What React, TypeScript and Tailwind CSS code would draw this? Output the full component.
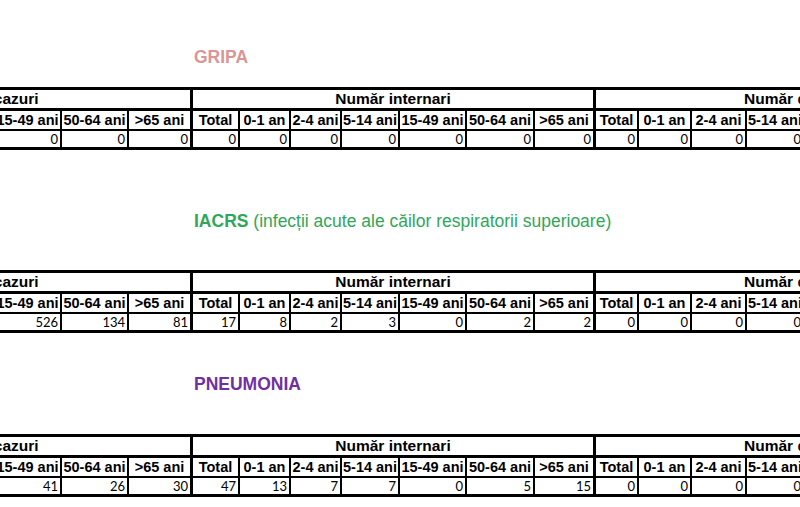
const headFont = { fontFamily: '"Liberation Sans", Arial, sans-serif' };
const numFont = { fontFamily: 'Lato, "Open Sans", sans-serif' };

const ages = ["Total", "0-1 an", "2-4 ani", "5-14 ani", "15-49 ani", "50-64 ani", ">65 ani"];
const groups = ["Număr cazuri", "Număr internari", "Număr decese"];

type Section = {
  title: string;
  note?: string;
  color: string;
  gapTop: string;
  gapTable: string;
  values: string[][];
};

const sections: Section[] = [
  {
    title: "GRIPA",
    color: "text-[#da9694]",
    gapTop: "mt-[47px]",
    gapTable: "mt-[20px]",
    values: [
      ["0", "0", "0", "0", "0", "0", "0"],
      ["0", "0", "0", "0", "0", "0", "0"],
      ["0", "0", "0", "0", "0", "0", "0"],
    ],
  },
  {
    title: "IACRS",
    note: " (infecții acute ale căilor respiratorii superioare)",
    color: "text-[#2fa75a]",
    gapTop: "mt-[61px]",
    gapTable: "mt-[39px]",
    values: [
      ["1698", "210", "345", "402", "526", "134", "81"],
      ["17", "8", "2", "3", "0", "2", "2"],
      ["0", "0", "0", "0", "0", "0", "0"],
    ],
  },
  {
    title: "PNEUMONIA",
    color: "text-[#7030a0]",
    gapTop: "mt-[41px]",
    gapTable: "mt-[40px]",
    values: [
      ["145", "18", "21", "9", "41", "26", "30"],
      ["47", "13", "7", "7", "0", "5", "15"],
      ["0", "0", "0", "0", "0", "0", "0"],
    ],
  },
];

function StatTable({ values }: { values: string[][] }) {
  return (
    <div
      className="ml-[-211px] w-max grid grid-cols-[46px_51px_51px_58px_67px_67px_64px_47px_51px_51px_58px_67px_68px_61px_43px_53px_55px_58px_67px_68px_61px] border-t-[3px] border-black text-black"
      style={headFont}
    >
      {groups.map((g) => (
        <div
          key={g}
          className="col-span-7 h-[21px] border-b-[3px] border-r-[3px] border-black flex items-center justify-center text-[15.5px] font-bold leading-none whitespace-nowrap"
        >
          {g}
        </div>
      ))}
      {groups.map((g) =>
        ages.map((a, i) => (
          <div
            key={g + a}
            className={`h-[20px] border-b-2 border-black flex items-center justify-center text-[14.5px] font-bold leading-none whitespace-nowrap ${
              i === 6 ? "border-r-[3px]" : "border-r-2"
            }`}
          >
            {a}
          </div>
        ))
      )}
      {values.map((row, gi) =>
        row.map((v, i) => (
          <div
            key={gi + "-" + i}
            className={`h-[19px] border-b-[3px] border-black flex items-center justify-end pr-[2px] text-[13px] leading-none ${
              i === 6 ? "border-r-[3px]" : "border-r-2"
            }`}
            style={numFont}
          >
            {v}
          </div>
        ))
      )}
    </div>
  );
}

export default function App() {
  return (
    <div className="w-[800px] h-[507px] overflow-hidden bg-white flex flex-col">
      {sections.map((s) => (
        <div key={s.title} className="flex flex-col">
          <div
            className={`${s.gapTop} pl-[194px] text-[17.5px] leading-[20px] whitespace-nowrap ${s.color}`}
            style={headFont}
          >
            <span className="font-bold">{s.title}</span>
            {s.note && <span>{s.note}</span>}
          </div>
          <div className={s.gapTable}>
            <StatTable values={s.values} />
          </div>
        </div>
      ))}
    </div>
  );
}
